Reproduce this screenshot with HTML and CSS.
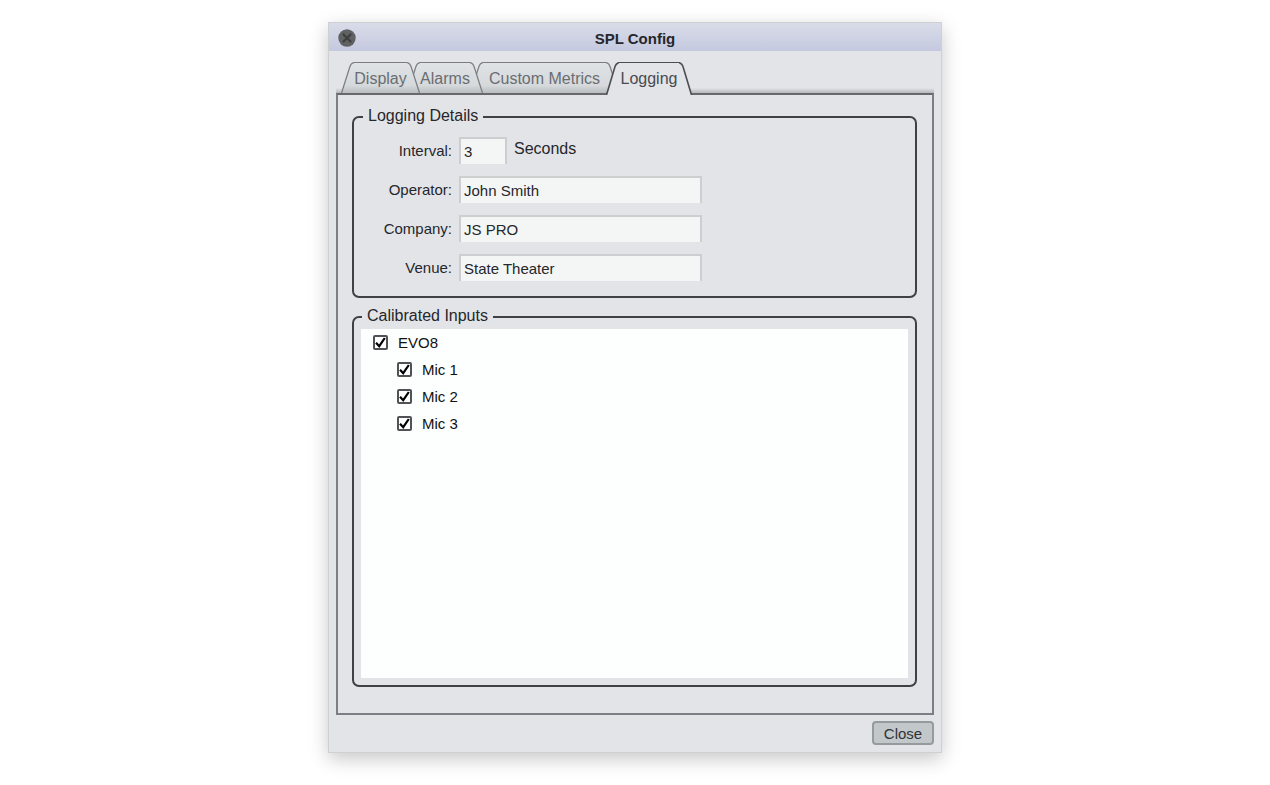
FILE: index.html
```html
<!DOCTYPE html>
<html lang="en">

<head>
    <meta charset="UTF-8" />
    <meta name="viewport" content="width=device-width, initial-scale=1.0" />
    <title>SPL Config</title>
    <link rel="stylesheet" href="styles.css">
</head>

<body>

    <main class="window">
        <header class="titlebar">
            <button class="window-close" type="button" aria-label="Close window">
                <svg viewBox="0 0 18 18">
                    <circle cx="9" cy="9" r="8.7" fill="#5f6162" />
                    <path d="M5.5 5.5l7 7M12.5 5.5l-7 7" stroke="#3d3f3f" stroke-width="2.2" stroke-linecap="round" />
                </svg>
            </button>
            <h1>SPL Config</h1>
        </header>

        <nav class="tabs" role="tablist">
            <button class="tab" type="button" role="tab">
                <svg class="slope" viewBox="0 0 13 32" preserveAspectRatio="none"><path d="M.5 32L8.5 6Q10 1 13 .7V32z" /><path class="edge" d="M.5 32L8.5 6Q10 1 13 .7" /></svg>
                <span>Display</span>
                <svg class="slope right" viewBox="0 0 13 32" preserveAspectRatio="none"><path d="M.5 32L8.5 6Q10 1 13 .7V32z" /><path class="edge" d="M.5 32L8.5 6Q10 1 13 .7" /></svg>
            </button>
            <button class="tab" type="button" role="tab">
                <svg class="slope" viewBox="0 0 13 32" preserveAspectRatio="none"><path d="M.5 32L8.5 6Q10 1 13 .7V32z" /><path class="edge" d="M.5 32L8.5 6Q10 1 13 .7" /></svg>
                <span>Alarms</span>
                <svg class="slope right" viewBox="0 0 13 32" preserveAspectRatio="none"><path d="M.5 32L8.5 6Q10 1 13 .7V32z" /><path class="edge" d="M.5 32L8.5 6Q10 1 13 .7" /></svg>
            </button>
            <button class="tab" type="button" role="tab">
                <svg class="slope" viewBox="0 0 13 32" preserveAspectRatio="none"><path d="M.5 32L8.5 6Q10 1 13 .7V32z" /><path class="edge" d="M.5 32L8.5 6Q10 1 13 .7" /></svg>
                <span>Custom Metrics</span>
                <svg class="slope right" viewBox="0 0 13 32" preserveAspectRatio="none"><path d="M.5 32L8.5 6Q10 1 13 .7V32z" /><path class="edge" d="M.5 32L8.5 6Q10 1 13 .7" /></svg>
            </button>
            <button class="tab active" type="button" role="tab" aria-selected="true">
                <svg class="slope" viewBox="0 0 13 32" preserveAspectRatio="none"><path d="M.5 32L8.5 6Q10 1 13 .7V32z" /><path class="edge" d="M.5 32L8.5 6Q10 1 13 .7" /></svg>
                <span>Logging</span>
                <svg class="slope right" viewBox="0 0 13 32" preserveAspectRatio="none"><path d="M.5 32L8.5 6Q10 1 13 .7V32z" /><path class="edge" d="M.5 32L8.5 6Q10 1 13 .7" /></svg>
            </button>
            <!-- gradient used by the sloped tab edges -->
            <svg class="defs" width="0" height="0">
                <linearGradient id="tabFill" x1="0" y1="0" x2="0" y2="1">
                    <stop offset="0" stop-color="#e0e3e6" />
                    <stop offset="0.75" stop-color="#d5d9dc" />
                    <stop offset="1" stop-color="#b9bdc0" />
                </linearGradient>
            </svg>
        </nav>

        <section class="panel">
            <fieldset class="group">
                <legend>Logging Details</legend>
                <div class="fields">
                    <label for="interval">Interval:</label>
                    <div class="interval">
                        <input type="text" id="interval" value="3" />
                        <span>Seconds</span>
                    </div>
                    <label for="operator">Operator:</label>
                    <input type="text" id="operator" value="John Smith" />
                    <label for="company">Company:</label>
                    <input type="text" id="company" value="JS PRO" />
                    <label for="venue">Venue:</label>
                    <input type="text" id="venue" value="State Theater" />
                </div>
            </fieldset>

            <fieldset class="group inputs">
                <legend>Calibrated Inputs</legend>
                <div class="tree">
                    <label><input type="checkbox" checked /> EVO8</label>
                    <div class="children">
                        <label><input type="checkbox" checked /> Mic 1</label>
                        <label><input type="checkbox" checked /> Mic 2</label>
                        <label><input type="checkbox" checked /> Mic 3</label>
                    </div>
                </div>
            </fieldset>
        </section>

        <footer>
            <button class="close" type="button">Close</button>
        </footer>
    </main>

</body>

</html>
```

FILE: styles.css
```css
* {
    box-sizing: border-box;
}

body {
    margin: 0;
    min-height: 100vh;
    padding: 22px 16px 32px;
    display: flex;
    justify-content: center;
    background-color: #fff;
    font-family: "Liberation Sans", Arial, sans-serif;
    font-size: 15px;
    color: #25272b;
}

button,
input {
    font-family: inherit;
}

.window {
    width: 100%;
    max-width: 614px;
    display: flex;
    flex-direction: column;
    background-color: #e3e4e8;
    border: 1px solid #cfd0d2;
    box-shadow: 0 6px 18px rgba(0, 0, 0, 0.22);
}

.titlebar {
    display: grid;
    grid-template-columns: 36px 1fr 36px;
    align-items: center;
    height: 28px;
    padding-top: 2px;
    background: linear-gradient(#d9dce8, #c5c9df);
}

.titlebar h1 {
    margin: 0;
    font-size: 15px;
    text-align: center;
}

.window-close {
    width: 18px;
    height: 18px;
    margin-left: 9px;
    padding: 0;
    border: none;
    background: none;
}

.window-close svg {
    display: block;
    fill: none;
}

.tabs {
    display: grid;
    grid-template-columns: 66px 63px 136px 86px;
    margin: 0 7px;
    padding: 11px 0 0 5px;
    background: linear-gradient(transparent 37px, #b5b7ba 42px);
}

.tab {
    display: flex;
    position: relative;
    width: calc(100% + 13px);
    height: 31px;
    padding: 0;
    border: none;
    background: none;
    font-size: 16px;
    line-height: 32px;
    color: #6a6d71;
}

.tab:nth-child(1) {
    z-index: 3;
}

.tab:nth-child(2) {
    z-index: 2;
}

.tab span {
    flex: 1;
    height: 100%;
    white-space: nowrap;
    border-top: 1px solid #7b7e81;
    background: linear-gradient(#e0e3e6, #d5d9dc 75%, #b9bdc0);
}

.slope {
    flex: none;
    width: 13px;
    height: 100%;
    fill: url(#tabFill);
}

.slope.right {
    transform: scaleX(-1);
}

.slope .edge {
    fill: none;
    stroke: #7b7e81;
    stroke-width: 1.3;
}

/* the open tab covers the top line of the panel */
.tab.active {
    z-index: 4;
    width: 100%;
    height: 33px;
    margin-bottom: -2px;
    color: #484b50;
}

.tab.active span {
    background: #e3e4e8;
    border-top-color: #4c4e53;
}

.tab.active .slope {
    fill: #e3e4e8;
}

.tab.active .edge {
    stroke: #4c4e53;
    stroke-width: 1.6;
}

.defs {
    position: absolute;
}

.panel {
    flex: 1;
    display: flex;
    flex-direction: column;
    margin: 0 7px;
    padding: 11px 15px 26px 14px;
    border: 2px solid #7c7e85;
    border-top-color: #66686d;
}

.group {
    min-width: 0;
    margin: 0;
    padding: 9px 8px 15px;
    border: 2px solid #3f4147;
    border-radius: 7px;
}

.group legend {
    margin-left: 1px;
    padding: 0 5px 2px;
    font-size: 16px;
    line-height: 20px;
}

.fields {
    display: grid;
    grid-template-columns: 90px minmax(0, 243px);
    gap: 12px 7px;
    align-items: center;
}

.fields label {
    text-align: right;
}

.fields input {
    width: 100%;
    height: 27px;
    padding: 0 3px;
    border: 2px solid #cdced0;
    border-bottom: none;
    background-color: #f4f6f6;
    font-size: 15px;
    color: #25272b;
}

.interval {
    display: flex;
    gap: 7px;
    font-size: 16px;
    line-height: 24px;
}

.fields .interval input {
    width: 48px;
}

.inputs {
    flex: 1;
    display: flex;
    margin-top: 8px;
    padding: 1px 7px 7px;
}

.tree {
    flex: 1;
    background-color: #fdfefe;
    color: #111;
}

.tree label {
    display: flex;
    align-items: center;
    gap: 10px;
    height: 27px;
    padding-left: 12px;
}

.children {
    padding-left: 24px;
}

.tree input {
    appearance: none;
    width: 15px;
    height: 15px;
    margin: 0;
    border: 2px solid #505255;
    border-radius: 2px;
    background: #fff;
}

.tree input:checked {
    background: #fff url("data:image/svg+xml,%3Csvg xmlns='http://www.w3.org/2000/svg' viewBox='0 0 11 11'%3E%3Cpath d='M1 5.8l3.2 3.4L9.8 1' fill='none' stroke='%23000' stroke-width='2.2'/%3E%3C/svg%3E") center / 11px 11px;
}

footer {
    display: flex;
    justify-content: flex-end;
    padding: 6px 7px 7px;
}

.close {
    width: 62px;
    height: 24px;
    padding: 0;
    border: 2px solid #959a9c;
    border-radius: 4px;
    background-color: #c2c7c9;
    font-size: 15px;
    color: #303336;
}
```
